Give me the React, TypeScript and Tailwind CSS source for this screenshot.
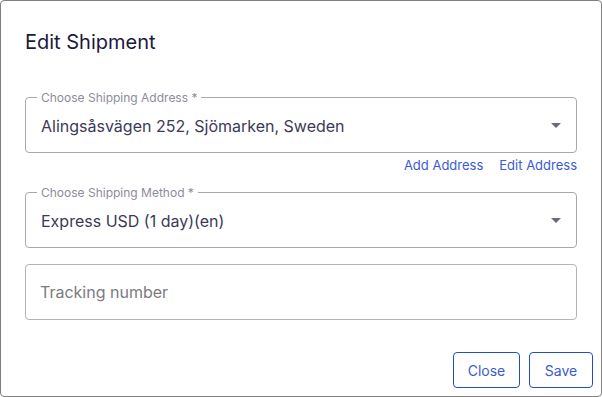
import React from "react";

const Caret = () => (
  <svg width="10" height="5" viewBox="0 0 10 5" className="shrink-0">
    <path d="M0 0 L10 0 L5 5 Z" fill="#6b6880" />
  </svg>
);

const SelectField = ({ label, value }: { label: string; value: string }) => (
  <div className="relative h-[56px] border border-[#a9a9ad] rounded-[4px] flex items-center pl-[15px] pr-[15px]">
    <span className="absolute -top-[8px] left-[11px] bg-white px-[4px] text-[12px] leading-[16px] text-[#8d8c99]">
      {label}
    </span>
    <span className="flex-1 text-[16px] text-[#3b3a57] pt-[2px]">{value}</span>
    <Caret />
  </div>
);

const App = () => {
  return (
    <div className="w-[602px] h-[397px] bg-white" style={{ fontFamily: "Inter, 'Noto Sans', sans-serif" }}>
      <div className="h-full border border-[#808080] rounded-[4px] flex flex-col">
        <div className="px-[24px] pt-[29px] pb-[43px]">
          <h2 className="text-[20px] leading-[24px] text-[#1b1a3d]">Edit Shipment</h2>
        </div>
        <div className="pl-[24px] pr-[24px] flex flex-col">
          <SelectField label="Choose Shipping Address *" value="Alingsåsvägen 252, Sjömarken, Sweden" />
          <div className="flex justify-end gap-[16px] text-[13px] leading-[18px] text-[#3b5bd6] mt-[3px]">
            <span>Add Address</span>
            <span>Edit Address</span>
          </div>
          <div className="mt-[18px]">
            <SelectField label="Choose Shipping Method *" value="Express USD (1 day)(en)" />
          </div>
          <div className="mt-[16px] h-[56px] border border-[#b4b4b8] rounded-[4px] flex items-center pl-[14px] text-[16px] text-[#7b7b80]">
            Tracking number
          </div>
        </div>
        <div className="mt-auto flex justify-end gap-[9px] pr-[8px] pb-[8px]">
          <button className="h-[36px] w-[67px] border border-[#1f4fc4] rounded-[4px] text-[14px] text-[#3a5bd1]">
            Close
          </button>
          <button className="h-[36px] w-[64px] border border-[#1f4fc4] rounded-[4px] text-[14px] text-[#3a5bd1]">
            Save
          </button>
        </div>
      </div>
    </div>
  );
};

export default App;
